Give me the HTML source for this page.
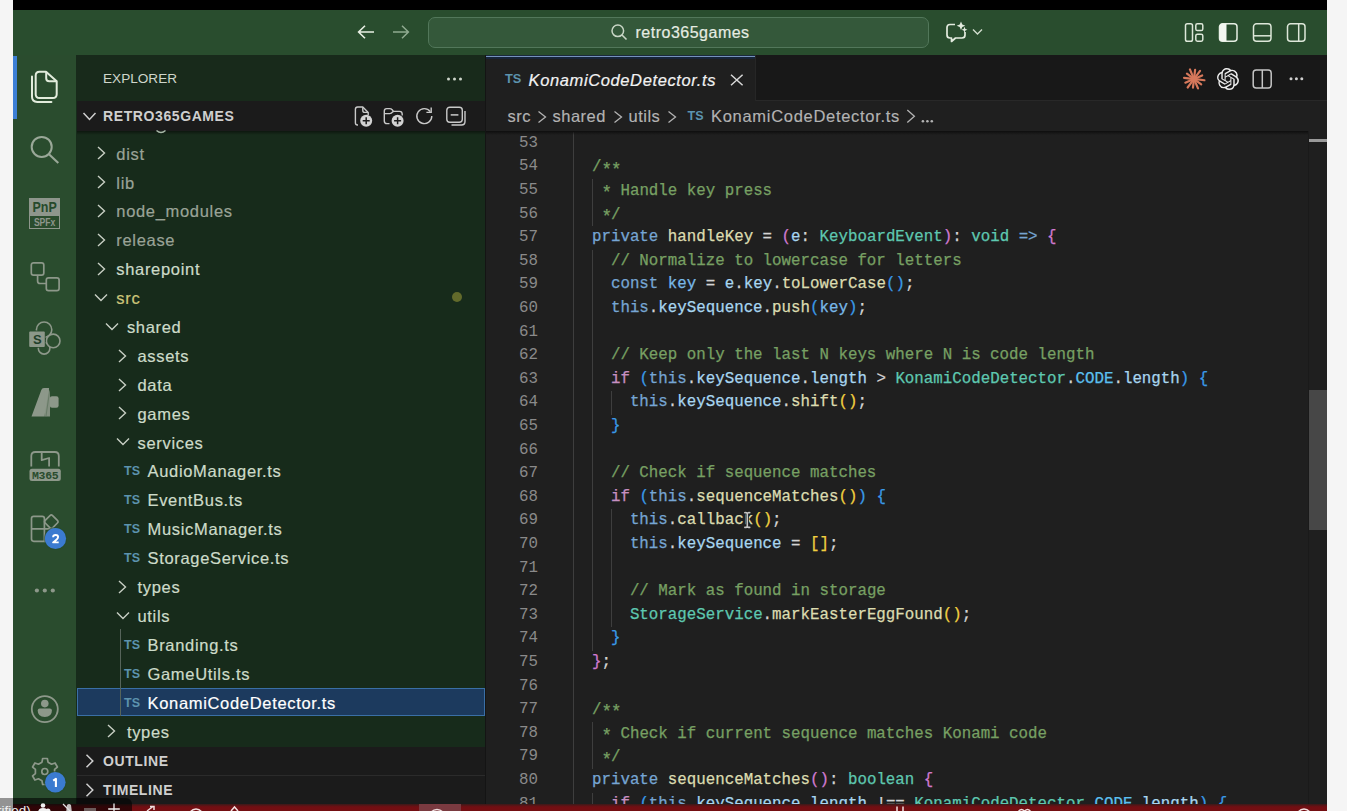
<!DOCTYPE html>
<html><head><meta charset="utf-8">
<style>
*{margin:0;padding:0;box-sizing:border-box}
html,body{width:1347px;height:811px;overflow:hidden;background:#f5f5f5;font-family:"Liberation Sans",sans-serif}
.abs{position:absolute}
svg{position:absolute;overflow:visible}
#top{position:absolute;left:13px;top:0;width:1314px;height:10px;background:#000}
#title{position:absolute;left:13px;top:10px;width:1314px;height:45px;background:#294d2e}
#search{position:absolute;left:428px;top:17px;width:501px;height:31px;border-radius:7px;background:#34583a;border:1px solid #52775a}
#search .txt{-webkit-text-stroke:0.2px;position:absolute;left:206.5px;top:5.5px;font-size:16px;color:#e6ece2;letter-spacing:0.5px}
#act{position:absolute;left:13px;top:55px;width:63px;height:749px;background:#2a4c2e}
#actind{position:absolute;left:13px;top:56px;width:3.5px;height:63px;background:#3c7fd6}
#side{position:absolute;left:76px;top:55px;width:410px;height:749px;background:#172b1b}
#sidehead{position:absolute;left:76px;top:55px;width:410px;height:46px;background:#182a1b}
.sechead{position:absolute;left:77px;width:408px;background:#1b1b1b;color:#cfcfcf;font-weight:bold;font-size:14px;letter-spacing:0.6px}
#editor{position:absolute;left:486px;top:55px;width:841px;height:749px;background:#1f1f1f}
#tabbar{position:absolute;left:486px;top:55px;width:841px;height:46px;background:#181818;border-bottom:1px solid #282828}
#tab{position:absolute;left:486px;top:55px;width:270px;height:47px;background:#1f1f1f;border-right:1px solid #262626}
#crumb{position:absolute;left:486px;top:101px;width:841px;height:30px;background:#1f1f1f}
.bc{-webkit-text-stroke:0.15px;position:absolute;top:101px;height:30px;line-height:30px;font-size:16.5px;letter-spacing:0.5px;color:#b3b3b3;white-space:pre}
#status{position:absolute;left:13px;top:803.5px;width:1314px;height:7.5px;background:linear-gradient(#3a1a1a,#6a1014 35%,#740e12 55%)}
.cl{-webkit-text-stroke:0.25px;position:absolute;left:573.0px;height:23.6px;line-height:23.6px;font-family:"Liberation Mono",monospace;font-size:15.8px;white-space:pre;color:#d4d4d4}
.ln{position:absolute;left:500px;width:38px;text-align:right;height:23.6px;line-height:23.6px;font-family:"Liberation Mono",monospace;font-size:15.8px;color:#8a8a8a}
.kw{color:#76a5d3}.cm{color:#77a063}.fn{color:#dcdcb0}.vr{color:#a8d6f0}.ty{color:#5ec8b0}.cn{color:#78b8e8}.cc{color:#5cc0f0}.pu{color:#d4d4d4}.ctl{color:#c68fc1}
.b1{color:#f0d040}.b2{color:#d07ad0}.b3{color:#3a9ae8}
.ast{position:relative;top:3.3px;font-size:17.5px;letter-spacing:-1.02px}
.ig{position:absolute;width:1px;background:#3e3e3e}
.tr{-webkit-text-stroke:0.2px;position:absolute;height:28.9px;line-height:28.9px;font-size:16.5px;letter-spacing:0.68px;white-space:pre}
.dim{color:#9aa397}.nrm{color:#cddbc9}.mod{color:#cdc67a}.sel{color:#ffffff}
.tsi{position:absolute;height:28.9px;line-height:28.9px;font-size:12.5px;font-weight:bold;color:#5c93ae;letter-spacing:0}
.chev{position:absolute}
</style></head><body>
<div id="top"></div>
<div id="title"></div>
<div class="abs" style="left:13px;top:54.5px;width:1314px;height:1px;background:#1d3121"></div>
<!-- nav arrows -->
<svg style="left:357px;top:24px" width="18" height="16" viewBox="0 0 18 16"><path d="M17 8 H2 M8 1.8 L1.6 8 L8 14.2" fill="none" stroke="#e8efe4" stroke-width="1.6"/></svg>
<svg style="left:392px;top:24px" width="18" height="16" viewBox="0 0 18 16"><path d="M1 8 H16 M10 1.8 L16.4 8 L10 14.2" fill="none" stroke="#8faa90" stroke-width="1.5"/></svg>
<div id="search"><div class="txt">retro365games</div></div>
<svg style="left:610px;top:23px" width="18" height="18" viewBox="0 0 18 18"><circle cx="7.8" cy="7.8" r="5.8" fill="none" stroke="#c9d6c6" stroke-width="1.5"/><path d="M12 12 L16.5 16.5" stroke="#c9d6c6" stroke-width="1.6"/></svg>
<!-- chat sparkle -->
<svg style="left:944px;top:20px" width="42" height="24" viewBox="0 0 42 24"><path d="M11 4.5 H6 Q3 4.5 3 7.5 V15 Q3 18 6 18 H7.5 V21.5 L11.5 18 H18 Q21 18 21 15 V12" fill="none" stroke="#e3ebdf" stroke-width="1.7" stroke-linejoin="round"/><path d="M17 1.5 L18.3 4.6 L21.3 5.8 L18.3 7 L17 10 L15.7 7 L12.7 5.8 L15.7 4.6 Z" fill="#e3ebdf"/><path d="M20.5 6.8 L21.4 9 L23.5 9.8 L21.4 10.6 L20.5 12.8 L19.6 10.6 L17.5 9.8 L19.6 9 Z" fill="#e3ebdf"/><path d="M29 9.5 L33.5 14 L38 9.5" fill="none" stroke="#d0dccc" stroke-width="1.4"/></svg>
<!-- layout icons -->
<svg style="left:1184px;top:22px" width="20" height="20" viewBox="0 0 20 20"><rect x="1.5" y="1.8" width="7" height="17.4" rx="1.8" fill="none" stroke="#dde7d9" stroke-width="1.5"/><rect x="11.8" y="1.8" width="7" height="6.8" rx="1.6" fill="none" stroke="#dde7d9" stroke-width="1.5"/><rect x="11.8" y="12.2" width="7" height="7" rx="1.6" fill="none" stroke="#dde7d9" stroke-width="1.5"/></svg>
<svg style="left:1218px;top:22px" width="20" height="20" viewBox="0 0 20 20"><rect x="1.5" y="1.8" width="17.5" height="17.4" rx="3" fill="none" stroke="#e6eee3" stroke-width="1.5"/><path d="M4.5 1.8 H8.5 V19.2 H4.5 Q1.5 19.2 1.5 16.2 V4.8 Q1.5 1.8 4.5 1.8 Z" fill="#f2f6f0"/></svg>
<svg style="left:1252px;top:22px" width="20" height="20" viewBox="0 0 20 20"><rect x="1.5" y="1.8" width="17.5" height="17.4" rx="3" fill="none" stroke="#dde7d9" stroke-width="1.5"/><path d="M1.5 13.8 H19" stroke="#dde7d9" stroke-width="1.5"/></svg>
<svg style="left:1286px;top:22px" width="20" height="20" viewBox="0 0 20 20"><rect x="1.5" y="1.8" width="17.5" height="17.4" rx="3" fill="none" stroke="#dde7d9" stroke-width="1.5"/><path d="M12.7 1.8 V19.2" stroke="#dde7d9" stroke-width="1.5"/></svg>

<div id="act"></div>
<div id="actind"></div>
<!-- activity icons -->
<svg style="left:30px;top:70px" width="28" height="34" viewBox="0 0 28 34"><path d="M16 1.7 H9.5 Q5.7 1.7 5.7 5.5 V24.2 Q5.7 28 9.5 28 H22.8 Q26.7 28 26.7 24.2 V11.3 L16 1.7 Z" fill="none" stroke="#e2ecdc" stroke-width="2" stroke-linejoin="round"/><path d="M16.2 1.8 V8.3 Q16.2 11.3 19.2 11.3 H26.6" fill="none" stroke="#e2ecdc" stroke-width="2"/><path d="M2 6.6 V26.8 Q2 31.9 7.2 31.9 H21.4" fill="none" stroke="#e2ecdc" stroke-width="2" stroke-linecap="round"/></svg>
<svg style="left:29px;top:135px" width="32" height="32" viewBox="0 0 32 32"><circle cx="12.7" cy="11.9" r="10" fill="none" stroke="#9aa898" stroke-width="2"/><path d="M20 19.2 L29.3 28" stroke="#9aa898" stroke-width="2.1"/></svg>
<!-- PnP -->
<div class="abs" style="left:29.2px;top:197.8px;width:31.3px;height:31px;border:1.3px solid #8e968c"></div>
<div class="abs" style="left:29.2px;top:197.8px;width:31.3px;height:18.6px;background:#8e968c"></div>
<div class="abs" style="left:29.2px;top:197.8px;width:31.3px;height:18.6px;color:#264a2b;font-weight:bold;font-size:14.5px;line-height:18.6px;text-align:center;transform:scaleX(0.86)">PnP</div>
<div class="abs" style="left:29.2px;top:216.3px;width:31.3px;height:12px;color:#8e968c;font-weight:bold;font-size:10.5px;line-height:12.5px;text-align:center;transform:scaleX(0.82)">SPFx</div>
<!-- tree icon -->
<svg style="left:29px;top:261px" width="32" height="32" viewBox="0 0 32 32"><rect x="2.3" y="1.8" width="12.5" height="12.3" rx="2.2" fill="none" stroke="#8d988a" stroke-width="1.7"/><rect x="17.3" y="16.8" width="12.8" height="12.8" rx="2.2" fill="none" stroke="#8d988a" stroke-width="1.7"/><path d="M8.6 14.1 V20 Q8.6 22.5 11 22.5 H17.3" fill="none" stroke="#8d988a" stroke-width="1.7"/></svg>
<!-- sharepoint -->
<svg style="left:28px;top:321px" width="34" height="36" viewBox="0 0 34 36"><g fill="none" stroke="#8d988a" stroke-width="1.6"><circle cx="16.1" cy="8.7" r="7.7"/><circle cx="16.1" cy="27.3" r="5.8"/><circle cx="25.2" cy="19.9" r="6.8" fill="#2a4c2e"/></g><rect x="0.4" y="9.6" width="17.2" height="17.2" rx="1.2" fill="#2a4c2e"/><rect x="1.2" y="10.4" width="15.6" height="15.6" rx="1" fill="#8d988a"/><text x="9.3" y="23" font-family="Liberation Sans" font-weight="bold" font-size="13" fill="#22402a" text-anchor="middle">S</text></svg>
<!-- power shape -->
<svg style="left:30px;top:386px" width="32" height="32" viewBox="0 0 32 32"><path d="M1.5 30.6 L11.3 4 Q12 2.1 14 2.1 H19.1 L14.4 30.6 Z" fill="#8d988a"/><path d="M15 2.1 H16.5 Q18.5 2.1 19.1 4 L20 6 V30.6 H14.4 Z" fill="#8d988a" opacity="0.9"/><rect x="19.8" y="10.3" width="8.8" height="11.5" rx="2.2" fill="#8d988a"/><path d="M19.8 4 L16 30" stroke="#2a4c2e" stroke-width="0.6" opacity="0.5"/></svg>
<!-- M365 -->
<svg style="left:28px;top:450px" width="34" height="34" viewBox="0 0 34 34"><path d="M3.3 16.6 V6 Q3.3 2 7.3 2 H26.8 Q30.8 2 30.8 6 V16.6" fill="none" stroke="#8d988a" stroke-width="1.8"/><path d="M13.7 2.5 V10.2 L21.1 8 V16.6" fill="none" stroke="#8d988a" stroke-width="1.8" stroke-linejoin="round"/><rect x="1.5" y="18.8" width="31.3" height="12.2" rx="2.5" fill="#8d988a"/><text x="17.2" y="29" font-family="Liberation Mono" font-weight="bold" font-size="11.5" fill="#2a4c2e" text-anchor="middle" letter-spacing="-0.3">M365</text></svg>
<!-- extensions -->
<svg style="left:29px;top:513px" width="34" height="32" viewBox="0 0 34 32"><path d="M4.7 3.4 H13.2 Q15.4 3.4 15.4 5.6 V28.3 H4.7 Q2.5 28.3 2.5 26.1 V5.6 Q2.5 3.4 4.7 3.4 Z" fill="none" stroke="#8d988a" stroke-width="1.7" stroke-linejoin="round"/><path d="M2.5 15.9 H24 V26 Q24 28.3 21.8 28.3 H15.4" fill="none" stroke="#8d988a" stroke-width="1.7"/><path d="M21 2.6 Q22.3 1.3 23.6 2.6 L28.4 7.4 Q29.7 8.7 28.4 10 L23.6 14.8 Q22.3 16.1 21 14.8 L16.2 10 Q14.9 8.7 16.2 7.4 Z" fill="none" stroke="#8d988a" stroke-width="1.7" stroke-linejoin="round"/></svg>
<svg style="left:43.8px;top:526.8px" width="23" height="23" viewBox="0 0 23 23"><circle cx="11.5" cy="11.5" r="11.5" fill="#264a2b" opacity="0.6"/><circle cx="11.5" cy="11.5" r="10.6" fill="#3b7bd0"/><path d="M9.1 10.3 Q9.1 8 11.6 8 Q14.1 8 14.1 10.1 Q14.1 11.5 12.4 12.8 L9.1 15.4 H14.7" fill="none" stroke="#fff" stroke-width="1.9" stroke-linejoin="round"/></svg>
<svg style="left:30px;top:585px" width="30" height="12" viewBox="0 0 30 12"><circle cx="6.9" cy="5.5" r="2.1" fill="#8d988a"/><circle cx="14.8" cy="5.5" r="2.1" fill="#8d988a"/><circle cx="22.8" cy="5.5" r="2.1" fill="#8d988a"/></svg>
<!-- account -->
<svg style="left:29px;top:693px" width="32" height="32" viewBox="0 0 32 32"><circle cx="15.8" cy="16.1" r="13" fill="none" stroke="#8d988a" stroke-width="1.8"/><circle cx="15.8" cy="10.6" r="3.8" fill="#8d988a"/><path d="M10.7 15.4 H20.9 Q22.9 15.4 22.9 17.4 Q22.9 23.9 15.8 23.9 Q8.7 23.9 8.7 17.4 Q8.7 15.4 10.7 15.4 Z" fill="#8d988a"/></svg>
<!-- gear -->
<svg style="left:29px;top:756px" width="32" height="32" viewBox="0 0 32 32"><path d="M12.97 6.18 L13.66 2.51 L18.34 2.51 L19.03 6.18 L22.56 8.22 L26.08 6.98 L28.42 11.03 L25.59 13.46 L25.59 17.54 L28.42 19.97 L26.08 24.02 L22.56 22.78 L19.03 24.82 L18.34 28.49 L13.66 28.49 L12.97 24.82 L9.44 22.78 L5.92 24.02 L3.58 19.97 L6.41 17.54 L6.41 13.46 L3.58 11.03 L5.92 6.98 L9.44 8.22 Z" fill="none" stroke="#8d988a" stroke-width="1.7" stroke-linejoin="round"/><circle cx="15.8" cy="15.5" r="3" fill="none" stroke="#8d988a" stroke-width="1.7"/></svg>
<svg style="left:44.4px;top:771.2px" width="22.6" height="22.6" viewBox="0 0 22.6 22.6"><circle cx="11.3" cy="11.3" r="11.3" fill="#264a2b" opacity="0.6"/><circle cx="11.3" cy="11.3" r="10.3" fill="#3b7bd0"/><path d="M9.2 9.6 L11.9 7.9 V16" fill="none" stroke="#fff" stroke-width="2.1" stroke-linejoin="round"/></svg>

<div id="side"></div>
<div id="sidehead"></div>
<div class="abs" style="left:103px;top:70px;font-size:13.6px;color:#cfd6cb;letter-spacing:0;line-height:18px">EXPLORER</div>
<svg style="left:445px;top:74px" width="20" height="10" viewBox="0 0 20 10"><circle cx="3.5" cy="5" r="1.5" fill="#cfd6cb"/><circle cx="9.5" cy="5" r="1.5" fill="#cfd6cb"/><circle cx="15.5" cy="5" r="1.5" fill="#cfd6cb"/></svg>
<div class="sechead" style="top:101px;height:30px;line-height:30px;padding-left:26px;letter-spacing:0.6px">RETRO365GAMES</div>
<svg style="left:82px;top:110px" width="16" height="12" viewBox="0 0 16 12"><path d="M1.5 3 L7.5 9.5 L13.5 3" fill="none" stroke="#cfcfcf" stroke-width="1.5"/></svg>
<!-- section header icons -->
<svg style="left:353px;top:105px" width="22" height="24" viewBox="0 0 22 24"><path d="M5 20 H4.6 Q2.4 20 2.4 17.8 V4.2 Q2.4 2 4.6 2 H9.8 L15.2 7.4 V10" fill="none" stroke="#c9c9c9" stroke-width="1.4" stroke-linejoin="round"/><path d="M9.8 2.2 V5.4 Q9.8 7.4 11.8 7.4 H15" fill="none" stroke="#c9c9c9" stroke-width="1.4"/><circle cx="13.2" cy="15.7" r="6" fill="#d2d2d2"/><path d="M13.2 12.2 V19.2 M9.7 15.7 H16.7" stroke="#1b1b1b" stroke-width="1.5"/></svg>
<svg style="left:382px;top:105px" width="24" height="24" viewBox="0 0 24 24"><path d="M7.5 18.6 H5 Q2.3 18.6 2.3 15.9 V6 Q2.3 3.6 4.7 3.6 H7.5 Q9.3 3.6 10.2 4.8 L11.5 6.4 H17.5 Q20.2 6.4 20.2 9.1 V10.5" fill="none" stroke="#c9c9c9" stroke-width="1.4" stroke-linejoin="round"/><path d="M2.3 8.6 H7.8 Q9.5 8.6 10.4 7.2 L11.4 6.4" fill="none" stroke="#c9c9c9" stroke-width="1.4"/><circle cx="15.6" cy="15.7" r="6" fill="#d2d2d2"/><path d="M15.6 12.2 V19.2 M12.1 15.7 H19.1" stroke="#1b1b1b" stroke-width="1.5"/></svg>
<svg style="left:414px;top:106px" width="20" height="20" viewBox="0 0 20 20"><path d="M16.3 5.6 A7.5 7.5 0 1 0 17.8 10" fill="none" stroke="#c9c9c9" stroke-width="1.4"/><path d="M17.2 1.6 V6.4 H12.4" fill="none" stroke="#c9c9c9" stroke-width="1.4"/></svg>
<svg style="left:445px;top:106px" width="22" height="22" viewBox="0 0 22 22"><rect x="1.8" y="1.2" width="15.5" height="15" rx="3" fill="none" stroke="#c9c9c9" stroke-width="1.4"/><path d="M20 5 V15.5 Q20 19 16.5 19 H6.5" fill="none" stroke="#c9c9c9" stroke-width="1.4"/><path d="M5.7 8.9 H13.4" stroke="#c9c9c9" stroke-width="1.5"/></svg>
<!-- selected row -->
<div class="abs" style="left:77px;top:687.5px;width:408px;height:28.5px;background:#1c3a5e;border:1px solid #3a6fa6"></div>
<div class="abs" style="left:119.5px;top:629px;width:1px;height:87px;background:#56645a"></div>
<div class="abs" style="left:452.2px;top:292.4px;width:10px;height:10px;border-radius:50%;background:#626a2b"></div>
<svg class="chev" style="left:94.8px;top:145.3px" width="12" height="16" viewBox="0 0 12 16"><path d="M3 2 L9.5 8 L3 14" fill="none" stroke="#c8cfc4" stroke-width="1.4"/></svg>
<div class="tr dim" style="left:116.3px;top:139.6px">dist</div>
<svg class="chev" style="left:94.8px;top:174.2px" width="12" height="16" viewBox="0 0 12 16"><path d="M3 2 L9.5 8 L3 14" fill="none" stroke="#c8cfc4" stroke-width="1.4"/></svg>
<div class="tr dim" style="left:116.3px;top:168.5px">lib</div>
<svg class="chev" style="left:94.8px;top:203.1px" width="12" height="16" viewBox="0 0 12 16"><path d="M3 2 L9.5 8 L3 14" fill="none" stroke="#c8cfc4" stroke-width="1.4"/></svg>
<div class="tr dim" style="left:116.3px;top:197.4px">node_modules</div>
<svg class="chev" style="left:94.8px;top:232.0px" width="12" height="16" viewBox="0 0 12 16"><path d="M3 2 L9.5 8 L3 14" fill="none" stroke="#c8cfc4" stroke-width="1.4"/></svg>
<div class="tr dim" style="left:116.3px;top:226.2px">release</div>
<svg class="chev" style="left:94.8px;top:260.9px" width="12" height="16" viewBox="0 0 12 16"><path d="M3 2 L9.5 8 L3 14" fill="none" stroke="#c8cfc4" stroke-width="1.4"/></svg>
<div class="tr nrm" style="left:116.3px;top:255.1px">sharepoint</div>
<svg class="chev" style="left:93.3px;top:291.8px" width="16" height="12" viewBox="0 0 16 12"><path d="M2 2.5 L8 8.5 L14 2.5" fill="none" stroke="#c8cfc4" stroke-width="1.4"/></svg>
<div class="tr mod" style="left:116.3px;top:284.1px">src</div>
<svg class="chev" style="left:103.9px;top:320.7px" width="16" height="12" viewBox="0 0 16 12"><path d="M2 2.5 L8 8.5 L14 2.5" fill="none" stroke="#c8cfc4" stroke-width="1.4"/></svg>
<div class="tr nrm" style="left:126.9px;top:312.9px">shared</div>
<svg class="chev" style="left:116.0px;top:347.6px" width="12" height="16" viewBox="0 0 12 16"><path d="M3 2 L9.5 8 L3 14" fill="none" stroke="#c8cfc4" stroke-width="1.4"/></svg>
<div class="tr nrm" style="left:137.5px;top:341.9px">assets</div>
<svg class="chev" style="left:116.0px;top:376.5px" width="12" height="16" viewBox="0 0 12 16"><path d="M3 2 L9.5 8 L3 14" fill="none" stroke="#c8cfc4" stroke-width="1.4"/></svg>
<div class="tr nrm" style="left:137.5px;top:370.8px">data</div>
<svg class="chev" style="left:116.0px;top:405.4px" width="12" height="16" viewBox="0 0 12 16"><path d="M3 2 L9.5 8 L3 14" fill="none" stroke="#c8cfc4" stroke-width="1.4"/></svg>
<div class="tr nrm" style="left:137.5px;top:399.6px">games</div>
<svg class="chev" style="left:114.5px;top:436.3px" width="16" height="12" viewBox="0 0 16 12"><path d="M2 2.5 L8 8.5 L14 2.5" fill="none" stroke="#c8cfc4" stroke-width="1.4"/></svg>
<div class="tr nrm" style="left:137.5px;top:428.6px">services</div>
<div class="tsi" style="left:124px;top:457.4px">TS</div>
<div class="tr nrm" style="left:147.5px;top:457.4px">AudioManager.ts</div>
<div class="tsi" style="left:124px;top:486.3px">TS</div>
<div class="tr nrm" style="left:147.5px;top:486.3px">EventBus.ts</div>
<div class="tsi" style="left:124px;top:515.2px">TS</div>
<div class="tr nrm" style="left:147.5px;top:515.2px">MusicManager.ts</div>
<div class="tsi" style="left:124px;top:544.1px">TS</div>
<div class="tr nrm" style="left:147.5px;top:544.1px">StorageService.ts</div>
<svg class="chev" style="left:116.0px;top:578.8px" width="12" height="16" viewBox="0 0 12 16"><path d="M3 2 L9.5 8 L3 14" fill="none" stroke="#c8cfc4" stroke-width="1.4"/></svg>
<div class="tr nrm" style="left:137.5px;top:573.0px">types</div>
<svg class="chev" style="left:114.5px;top:609.7px" width="16" height="12" viewBox="0 0 16 12"><path d="M2 2.5 L8 8.5 L14 2.5" fill="none" stroke="#c8cfc4" stroke-width="1.4"/></svg>
<div class="tr nrm" style="left:137.5px;top:602.0px">utils</div>
<div class="tsi" style="left:124px;top:630.8px">TS</div>
<div class="tr nrm" style="left:147.5px;top:630.8px">Branding.ts</div>
<div class="tsi" style="left:124px;top:659.8px">TS</div>
<div class="tr nrm" style="left:147.5px;top:659.8px">GameUtils.ts</div>
<div class="tsi" style="left:124px;top:688.7px">TS</div>
<div class="tr sel" style="left:147.5px;top:688.7px">KonamiCodeDetector.ts</div>
<svg class="chev" style="left:105.4px;top:723.3px" width="12" height="16" viewBox="0 0 12 16"><path d="M3 2 L9.5 8 L3 14" fill="none" stroke="#c8cfc4" stroke-width="1.4"/></svg>
<div class="tr nrm" style="left:126.9px;top:717.5px">types</div>
<div class="abs" style="left:77px;top:131px;width:408px;height:4px;background:linear-gradient(rgba(0,0,0,0.45),rgba(0,0,0,0))"></div>
<div class="sechead" style="top:746.5px;height:29px;line-height:29px;padding-left:26px;border-bottom:1px solid #2b2b2b">OUTLINE</div>
<div class="sechead" style="top:775.5px;height:28.5px;line-height:28.5px;padding-left:26px">TIMELINE</div>
<svg style="left:82px;top:753px" width="14" height="16" viewBox="0 0 14 16"><path d="M4.5 1.8 L10.8 8 L4.5 14.2" fill="none" stroke="#cfcfcf" stroke-width="1.5"/></svg>
<svg style="left:82px;top:782px" width="14" height="16" viewBox="0 0 14 16"><path d="M4.5 1.8 L10.8 8 L4.5 14.2" fill="none" stroke="#cfcfcf" stroke-width="1.5"/></svg>
<div class="abs" style="left:485px;top:55px;width:1px;height:749px;background:#141414"></div>

<div id="editor"></div>
<div id="tabbar"></div>
<div id="tab"></div>
<div class="abs" style="left:486px;top:55px;width:269px;height:1px;background:#1a2a3c"></div><div class="abs" style="left:486px;top:56px;width:269px;height:1px;background:#7592bd"></div><div class="abs" style="left:486px;top:57px;width:269px;height:1.5px;background:#17253a"></div>
<div class="abs" style="left:505px;top:56.3px;height:46px;line-height:46px;font-size:12.8px;font-weight:bold;color:#5c93ae">TS</div>
<div class="abs" style="left:528.5px;top:56.5px;height:46px;line-height:46px;font-size:16.5px;font-style:italic;letter-spacing:0.62px;color:#f2f2f2;-webkit-text-stroke:0.2px">KonamiCodeDetector.ts</div>
<svg style="left:729.5px;top:74px" width="14" height="12" viewBox="0 0 14 12"><path d="M1 0.8 L12.6 11.2 M12.6 0.8 L1 11.2" stroke="#d8d8d8" stroke-width="1.5"/></svg>
<!-- tab bar right icons -->
<svg style="left:1182px;top:67px" width="24" height="24" viewBox="-12 -12 24 24"><path d="M1.49 0.18 L10.42 1.26" stroke="#d6785b" stroke-width="2.2" stroke-linecap="round"/><path d="M1.20 0.90 L7.20 5.40" stroke="#d6785b" stroke-width="2.2" stroke-linecap="round"/><path d="M0.59 1.38 L4.01 9.38" stroke="#d6785b" stroke-width="2.2" stroke-linecap="round"/><path d="M-0.18 1.49 L-1.03 8.54" stroke="#d6785b" stroke-width="2.2" stroke-linecap="round"/><path d="M-0.90 1.20 L-6.36 8.48" stroke="#d6785b" stroke-width="2.2" stroke-linecap="round"/><path d="M-1.38 0.59 L-8.64 3.69" stroke="#d6785b" stroke-width="2.2" stroke-linecap="round"/><path d="M-1.49 -0.18 L-9.93 -1.20" stroke="#d6785b" stroke-width="2.2" stroke-linecap="round"/><path d="M-1.20 -0.90 L-7.04 -5.28" stroke="#d6785b" stroke-width="2.2" stroke-linecap="round"/><path d="M-0.59 -1.38 L-4.08 -9.56" stroke="#d6785b" stroke-width="2.2" stroke-linecap="round"/><path d="M0.18 -1.49 L1.10 -9.13" stroke="#d6785b" stroke-width="2.2" stroke-linecap="round"/><path d="M0.90 -1.20 L6.06 -8.08" stroke="#d6785b" stroke-width="2.2" stroke-linecap="round"/><path d="M1.38 -0.59 L8.18 -3.50" stroke="#d6785b" stroke-width="2.2" stroke-linecap="round"/><circle cx="0" cy="0" r="3" fill="#d6785b"/></svg>
<svg style="left:1217px;top:67.8px" width="22" height="22" viewBox="0 0 24 24"><path fill="#ececec" d="M22.2819 9.8211a5.9847 5.9847 0 0 0-.5157-4.9108 6.0462 6.0462 0 0 0-6.5098-2.9A6.0651 6.0651 0 0 0 4.9807 4.1818a5.9847 5.9847 0 0 0-3.9977 2.9 6.0462 6.0462 0 0 0 .7427 7.0966 5.98 5.98 0 0 0 .511 4.9107 6.051 6.051 0 0 0 6.5146 2.9001A5.9847 5.9847 0 0 0 13.2599 24a6.0557 6.0557 0 0 0 5.7718-4.2058 5.9894 5.9894 0 0 0 3.9977-2.9001 6.0557 6.0557 0 0 0-.7475-7.0729zm-9.022 12.6081a4.4755 4.4755 0 0 1-2.8764-1.0408l.1419-.0804 4.7783-2.7582a.7948.7948 0 0 0 .3927-.6813v-6.7369l2.02 1.1686a.071.071 0 0 1 .038.052v5.5826a4.504 4.504 0 0 1-4.4945 4.4944zm-9.6607-4.1254a4.4708 4.4708 0 0 1-.5346-3.0137l.142.0852 4.783 2.7582a.7712.7712 0 0 0 .7806 0l5.8428-3.3685v2.3324a.0804.0804 0 0 1-.0332.0615L9.74 19.9502a4.4992 4.4992 0 0 1-6.1408-1.6464zM2.3408 7.8956a4.485 4.485 0 0 1 2.3655-1.9728V11.6a.7664.7664 0 0 0 .3879.6765l5.8144 3.3543-2.0201 1.1685a.0757.0757 0 0 1-.071 0l-4.8303-2.7865A4.504 4.504 0 0 1 2.3408 7.872zm16.5963 3.8558L13.1038 8.364 15.1192 7.2a.0757.0757 0 0 1 .071 0l4.8303 2.7913a4.4944 4.4944 0 0 1-.6765 8.1042v-5.6772a.79.79 0 0 0-.407-.667zm2.0107-3.0231l-.142-.0852-4.7735-2.7818a.7759.7759 0 0 0-.7854 0L9.409 9.2297V6.8974a.0662.0662 0 0 1 .0284-.0615l4.8303-2.7866a4.4992 4.4992 0 0 1 6.6802 4.66zM8.3065 12.863l-2.02-1.1638a.0804.0804 0 0 1-.038-.0567V6.0742a4.4992 4.4992 0 0 1 7.3757-3.4537l-.142.0805L8.704 5.459a.7948.7948 0 0 0-.3927.6813zm1.0976-2.3654l2.602-1.4998 2.6069 1.4998v2.9994l-2.5974 1.4997-2.6067-1.4997Z"/></svg>
<svg style="left:1252px;top:69px" width="21" height="20" viewBox="0 0 21 20"><rect x="1.2" y="1" width="18" height="18" rx="3" fill="none" stroke="#c6c6c6" stroke-width="1.5"/><path d="M10.3 1 V19" stroke="#c6c6c6" stroke-width="1.5"/></svg>
<svg style="left:1287px;top:74px" width="20" height="10" viewBox="0 0 20 10"><circle cx="4" cy="4.8" r="1.5" fill="#d0d0d0"/><circle cx="9.4" cy="4.8" r="1.5" fill="#d0d0d0"/><circle cx="14.8" cy="4.8" r="1.5" fill="#d0d0d0"/></svg>
<div id="crumb"></div>
<div class="bc" style="left:507.5px">src</div>
<div class="bc" style="left:552.5px">shared</div>
<div class="bc" style="left:628.5px">utils</div>
<div class="bc" style="left:711px;letter-spacing:0.7px">KonamiCodeDetector.ts</div>
<div class="abs" style="left:687.5px;top:101px;height:30px;line-height:30px;font-size:12.5px;font-weight:bold;color:#5c93ae">TS</div>
<svg style="left:536px;top:110px" width="12" height="14" viewBox="0 0 12 14"><path d="M2.5 1.5 L9.5 7 L2.5 12.5" fill="none" stroke="#b3b3b3" stroke-width="1.3"/></svg>
<svg style="left:612px;top:110px" width="12" height="14" viewBox="0 0 12 14"><path d="M2.5 1.5 L9.5 7 L2.5 12.5" fill="none" stroke="#b3b3b3" stroke-width="1.3"/></svg>
<svg style="left:665.5px;top:110px" width="12" height="14" viewBox="0 0 12 14"><path d="M2.5 1.5 L9.5 7 L2.5 12.5" fill="none" stroke="#b3b3b3" stroke-width="1.3"/></svg>
<svg style="left:904.5px;top:109px" width="12" height="15" viewBox="0 0 12 15"><path d="M2.3 1 L9.4 7.3 L2.3 13.6" fill="none" stroke="#b3b3b3" stroke-width="1.3"/></svg>
<svg style="left:919px;top:118px" width="16" height="6" viewBox="0 0 16 6"><circle cx="3.9" cy="3.3" r="1.3" fill="#b3b3b3"/><circle cx="8.4" cy="3.3" r="1.3" fill="#b3b3b3"/><circle cx="12.8" cy="3.3" r="1.3" fill="#b3b3b3"/></svg>
<div class="ig" style="left:573.0px;top:131.8px;height:684.4px"></div>
<div class="ig" style="left:592.0px;top:179.0px;height:47.2px"></div>
<div class="ig" style="left:592.0px;top:249.8px;height:401.2px"></div>
<div class="ig" style="left:610.9px;top:391.4px;height:23.6px"></div>
<div class="ig" style="left:610.9px;top:509.4px;height:118.0px"></div>
<div class="ig" style="left:592.0px;top:721.8px;height:47.2px"></div>
<div class="ig" style="left:592.0px;top:792.6px;height:23.6px"></div>
<div class="cl" style="top:131.80px"></div>
<div class="ln" style="top:131.80px">53</div>
<div class="cl" style="top:155.40px">  <span class="cm">/<span class="ast">*</span><span class="ast">*</span></span></div>
<div class="ln" style="top:155.40px">54</div>
<div class="cl" style="top:179.00px">   <span class="cm"><span class="ast">*</span> Handle key press</span></div>
<div class="ln" style="top:179.00px">55</div>
<div class="cl" style="top:202.60px">   <span class="cm"><span class="ast">*</span>/</span></div>
<div class="ln" style="top:202.60px">56</div>
<div class="cl" style="top:226.20px">  <span class="kw">private</span> <span class="fn">handleKey</span><span class="pu"> = </span><span class="b2">(</span><span class="vr">e</span><span class="pu">: </span><span class="ty">KeyboardEvent</span><span class="b2">)</span><span class="pu">: </span><span class="ty">void</span> <span class="kw">=&gt;</span> <span class="b2">{</span></div>
<div class="ln" style="top:226.20px">57</div>
<div class="cl" style="top:249.80px">    <span class="cm">// Normalize to lowercase for letters</span></div>
<div class="ln" style="top:249.80px">58</div>
<div class="cl" style="top:273.40px">    <span class="kw">const</span> <span class="cn">key</span><span class="pu"> = </span><span class="vr">e</span><span class="pu">.</span><span class="vr">key</span><span class="pu">.</span><span class="fn">toLowerCase</span><span class="b3">(</span><span class="b3">)</span><span class="pu">;</span></div>
<div class="ln" style="top:273.40px">59</div>
<div class="cl" style="top:297.00px">    <span class="kw">this</span><span class="pu">.</span><span class="vr">keySequence</span><span class="pu">.</span><span class="fn">push</span><span class="b3">(</span><span class="cn">key</span><span class="b3">)</span><span class="pu">;</span></div>
<div class="ln" style="top:297.00px">60</div>
<div class="cl" style="top:320.60px"></div>
<div class="ln" style="top:320.60px">61</div>
<div class="cl" style="top:344.20px">    <span class="cm">// Keep only the last N keys where N is code length</span></div>
<div class="ln" style="top:344.20px">62</div>
<div class="cl" style="top:367.80px">    <span class="ctl">if</span> <span class="b3">(</span><span class="kw">this</span><span class="pu">.</span><span class="vr">keySequence</span><span class="pu">.</span><span class="vr">length</span><span class="pu"> &gt; </span><span class="ty">KonamiCodeDetector</span><span class="pu">.</span><span class="cc">CODE</span><span class="pu">.</span><span class="vr">length</span><span class="b3">)</span> <span class="b3">{</span></div>
<div class="ln" style="top:367.80px">63</div>
<div class="cl" style="top:391.40px">      <span class="kw">this</span><span class="pu">.</span><span class="vr">keySequence</span><span class="pu">.</span><span class="fn">shift</span><span class="b1">(</span><span class="b1">)</span><span class="pu">;</span></div>
<div class="ln" style="top:391.40px">64</div>
<div class="cl" style="top:415.00px">    <span class="b3">}</span></div>
<div class="ln" style="top:415.00px">65</div>
<div class="cl" style="top:438.60px"></div>
<div class="ln" style="top:438.60px">66</div>
<div class="cl" style="top:462.20px">    <span class="cm">// Check if sequence matches</span></div>
<div class="ln" style="top:462.20px">67</div>
<div class="cl" style="top:485.80px">    <span class="ctl">if</span> <span class="b3">(</span><span class="kw">this</span><span class="pu">.</span><span class="fn">sequenceMatches</span><span class="b1">(</span><span class="b1">)</span><span class="b3">)</span> <span class="b3">{</span></div>
<div class="ln" style="top:485.80px">68</div>
<div class="cl" style="top:509.40px">      <span class="kw">this</span><span class="pu">.</span><span class="fn">callback</span><span class="b1">(</span><span class="b1">)</span><span class="pu">;</span></div>
<div class="ln" style="top:509.40px">69</div>
<div class="cl" style="top:533.00px">      <span class="kw">this</span><span class="pu">.</span><span class="vr">keySequence</span><span class="pu"> = </span><span class="b1">[</span><span class="b1">]</span><span class="pu">;</span></div>
<div class="ln" style="top:533.00px">70</div>
<div class="cl" style="top:556.60px"></div>
<div class="ln" style="top:556.60px">71</div>
<div class="cl" style="top:580.20px">      <span class="cm">// Mark as found in storage</span></div>
<div class="ln" style="top:580.20px">72</div>
<div class="cl" style="top:603.80px">      <span class="ty">StorageService</span><span class="pu">.</span><span class="fn">markEasterEggFound</span><span class="b1">(</span><span class="b1">)</span><span class="pu">;</span></div>
<div class="ln" style="top:603.80px">73</div>
<div class="cl" style="top:627.40px">    <span class="b3">}</span></div>
<div class="ln" style="top:627.40px">74</div>
<div class="cl" style="top:651.00px">  <span class="b2">}</span><span class="pu">;</span></div>
<div class="ln" style="top:651.00px">75</div>
<div class="cl" style="top:674.60px"></div>
<div class="ln" style="top:674.60px">76</div>
<div class="cl" style="top:698.20px">  <span class="cm">/<span class="ast">*</span><span class="ast">*</span></span></div>
<div class="ln" style="top:698.20px">77</div>
<div class="cl" style="top:721.80px">   <span class="cm"><span class="ast">*</span> Check if current sequence matches Konami code</span></div>
<div class="ln" style="top:721.80px">78</div>
<div class="cl" style="top:745.40px">   <span class="cm"><span class="ast">*</span>/</span></div>
<div class="ln" style="top:745.40px">79</div>
<div class="cl" style="top:769.00px">  <span class="kw">private</span> <span class="fn">sequenceMatches</span><span class="b2">(</span><span class="b2">)</span><span class="pu">: </span><span class="ty">boolean</span> <span class="b2">{</span></div>
<div class="ln" style="top:769.00px">80</div>
<div class="cl" style="top:792.60px">    <span class="ctl">if</span> <span class="b3">(</span><span class="kw">this</span><span class="pu">.</span><span class="vr">keySequence</span><span class="pu">.</span><span class="vr">length</span><span class="pu"> !== </span><span class="ty">KonamiCodeDetector</span><span class="pu">.</span><span class="cc">CODE</span><span class="pu">.</span><span class="vr">length</span><span class="b3">)</span> <span class="b3">{</span></div>
<div class="ln" style="top:792.60px">81</div>
<svg style="left:743px;top:511px" width="9" height="18" viewBox="0 0 9 18"><path d="M1.2 1.8 Q4.3 1 4.3 3.5 V14.5 Q4.3 17 1.2 16.2 M7.4 1.8 Q4.3 1 4.3 3.5 M4.3 14.5 Q4.3 17 7.4 16.2" fill="none" stroke="#1a1a1a" stroke-width="3.2"/><path d="M1.2 1.8 Q4.3 1 4.3 3.5 V14.5 Q4.3 17 1.2 16.2 M7.4 1.8 Q4.3 1 4.3 3.5 M4.3 14.5 Q4.3 17 7.4 16.2" fill="none" stroke="#c4c4c4" stroke-width="1.6"/></svg>
<svg style="left:155px;top:129px" width="12" height="6" viewBox="0 0 12 6"><path d="M1.5 1.5 Q6 5.5 10.5 1.5" fill="none" stroke="#a8b8a8" stroke-width="1.4"/></svg>
<!-- editor top shadow -->
<div class="abs" style="left:486px;top:131px;width:822px;height:4px;background:linear-gradient(#0e0e0e,rgba(14,14,14,0))"></div>
<!-- scrollbar -->
<div class="abs" style="left:1308px;top:131px;width:1px;height:673px;background:#1a1a1a"></div>
<div class="abs" style="left:1308.5px;top:139px;width:18.5px;height:3px;background:#9a9a9a"></div>
<div class="abs" style="left:1308.5px;top:390px;width:18.5px;height:140px;background:#474747"></div>

<div id="status"></div>
<!-- bottom-left overlay -->
<div class="abs" style="left:0;top:798px;width:132px;height:13px;border-top-right-radius:6px;background:rgba(0,0,0,0.58)"></div>
<div class="abs" style="left:0;top:798px;width:13px;height:13px;background:#939393"></div>
<div class="abs" style="left:-3px;top:802.5px;font-size:13.5px;line-height:16px;color:#f0f0f0">rified)</div>
<svg style="left:37px;top:803px" width="16" height="10" viewBox="0 0 16 10"><circle cx="6" cy="2.5" r="2.3" fill="#f0f0f0"/><path d="M1 10 Q1 5 6 5 Q11 5 11 10 Z" fill="#f0f0f0"/><circle cx="11" cy="8" r="2.5" fill="#f0f0f0"/></svg><svg style="left:62px;top:803px" width="14" height="10" viewBox="0 0 14 10"><path d="M1 1 L10 10" stroke="#e0e0e0" stroke-width="1.2"/><path d="M5 2 Q7 0 9 2 L10 10 L4 10 Z" fill="#e0e0e0" opacity="0.85"/></svg><div class="abs" style="left:84px;top:808px;width:12px;height:4px;background:#6a5a5a"></div><svg style="left:107px;top:803px" width="14" height="10" viewBox="0 0 14 10"><path d="M7 0.5 V10 M1.2 6 H12.8" stroke="#f0f0f0" stroke-width="1.3"/></svg><div class="abs" style="left:418.7px;top:804.3px;width:42px;height:7px;background:#7a3a40"></div><svg style="left:0;top:0" width="1347" height="811" viewBox="0 0 1347 811"><g fill="none" stroke="#f2dede" stroke-width="1.5"><path d="M147 811 L153 806.5 M150 806.5 H154 V810"/><path d="M190 812 Q196 806 202 812"/><path d="M231 811 L234.5 807 L238 811"/><path d="M431 812 Q437 807 443 812"/><path d="M897 806.5 V811 M903 806.5 V811"/><path d="M1018 812 Q1021.5 807 1025 812 M1024 812 Q1027.5 807 1031 812"/><path d="M1298 812 Q1304 806 1310 812"/></g></svg>
</body></html>
